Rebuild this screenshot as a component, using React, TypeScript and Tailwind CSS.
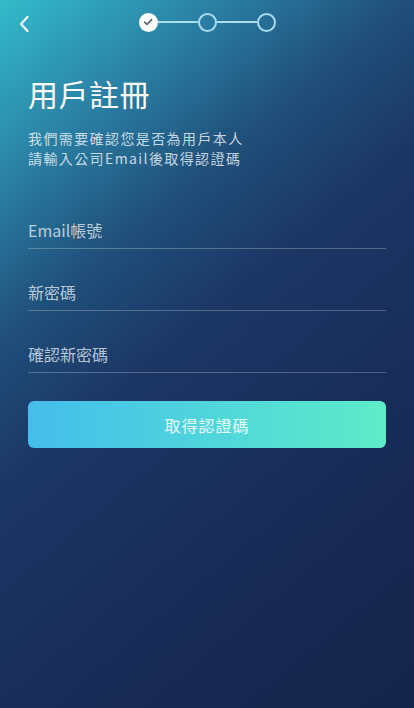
import React from 'react';

const fields = ['Email帳號', '新密碼', '確認新密碼'];

const Stepper: React.FC = () => (
  <div className="flex items-center">
    <div className="flex h-[19px] w-[19px] items-center justify-center rounded-full bg-white">
      <svg width="10" height="8" viewBox="0 0 10 8" fill="none">
        <path d="M1.5 4.2 L4 6.4 L8.6 1.6" stroke="#5b6470" strokeWidth="1.6" strokeLinecap="round" strokeLinejoin="round" />
      </svg>
    </div>
    <div className="h-[2px] w-[40px] bg-[#a9dcec]" />
    <div className="h-[19px] w-[19px] rounded-full border-2 border-[#a9dcec]" />
    <div className="h-[2px] w-[40px] bg-[#a9dcec]" />
    <div className="h-[19px] w-[19px] rounded-full border-2 border-[#a9dcec]" />
  </div>
);

export default function App() {
  return (
    <div
      className="flex h-[708px] w-[414px] flex-col bg-[linear-gradient(140deg,#33bccb_0%,#2a7ea3_18%,#20507b_32%,#1c3765_46%,#182c58_70%,#152449_100%)] text-white"
      style={{ fontFamily: '"Noto Sans CJK TC", "Noto Sans", sans-serif' }}
    >
      {/* Header */}
      <div className="relative flex h-[44px] items-center justify-center">
        <button className="absolute left-[14px] top-[11px] p-1">
          <svg width="12" height="18" viewBox="0 0 12 18" fill="none">
            <path d="M9.5 2 L3 9 L9.5 16" stroke="white" strokeWidth="2" strokeLinecap="round" strokeLinejoin="round" />
          </svg>
        </button>
        <Stepper />
      </div>

      <div className="flex flex-col px-[28px]">
        <h1 className="mt-[29px] text-[30px] leading-[40px] font-normal tracking-[0.5px]">用戶註冊</h1>
        <p className="mt-[15px] text-[14px] leading-[20px] text-white/75 tracking-[1.4px]">
          我們需要確認您是否為用戶本人
          <br />
          請輸入公司Email後取得認證碼
        </p>

        <div className="mt-[33px] flex flex-col gap-[14px]">
          {fields.map((f) => (
            <div key={f} className="flex h-[48px] items-end border-b border-white/25 pb-[6px]">
              <span className="text-[16px] leading-[24px] text-white/70">{f}</span>
            </div>
          ))}
        </div>

        <button className="mt-[28px] h-[47px] w-full rounded-[6px] bg-gradient-to-r from-[#45bdec] to-[#5eecc8] text-[16px] text-white/85 tracking-[1px]">
          取得認證碼
        </button>
      </div>
    </div>
  );
}
